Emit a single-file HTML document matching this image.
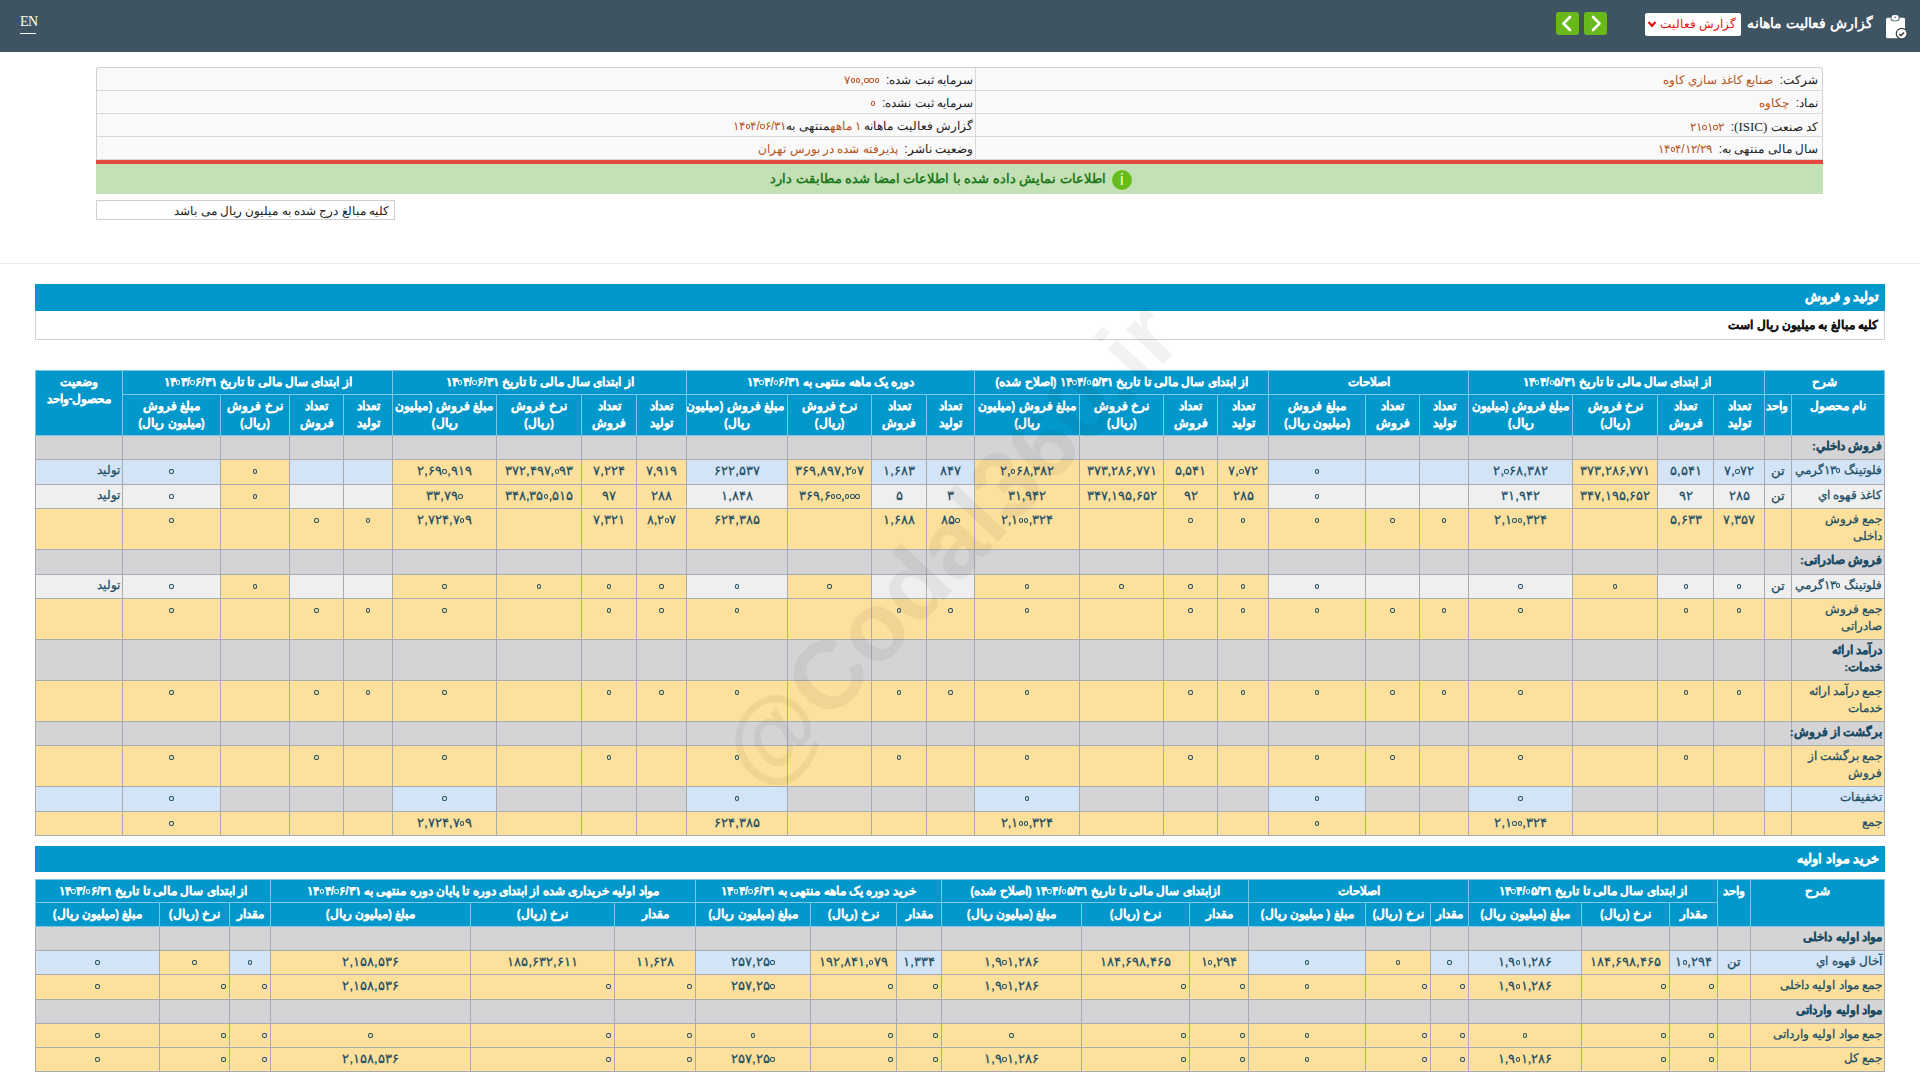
<!DOCTYPE html><html lang="fa" dir="rtl"><head><meta charset="utf-8"><title>گزارش فعالیت ماهانه</title><style>
*{box-sizing:border-box}
html,body{margin:0;padding:0;background:#fff}
body{width:1920px;height:1080px;overflow:hidden;position:relative;font-family:"Liberation Sans", sans-serif;direction:rtl;color:#222}
.abs{position:absolute}
#top{left:0;top:0;width:1920px;height:52px;background:#3f5462}
table.t{position:absolute;border-collapse:collapse;table-layout:fixed;direction:rtl;font-size:13px}
table.t td,table.t th{border:1px solid #a9abb2;padding:0 3px;overflow:hidden;white-space:normal;line-height:17px}
table.t th{background:#0398cb;color:#fff;font-weight:bold;text-align:center;border-color:#7cc7e6;font-size:12px;-webkit-text-stroke:0.2px #fff}
table.t td{-webkit-text-stroke:0.25px currentColor;color:#1b4c64;text-align:center;vertical-align:top;padding-top:2px}
td.nm{text-align:right!important;font-size:12px;padding-right:2px!important;padding-left:0!important}
td.nm.b{font-size:11.8px;overflow:visible}
table.t td,table.t th{white-space:nowrap}
td.b{font-weight:bold}
td.r{text-align:right!important}
table.t th.top{vertical-align:top;padding-top:3px}
.info{left:96px;top:67px;width:1727px;border:1px solid #d2d2d2;border-bottom:none;background:#f9f9f9;border-radius:3px 3px 0 0}
.info .row{height:23px;border-bottom:1px solid #d9d9d9;position:relative;font-size:12px;line-height:25px}
.info .c1{position:absolute;right:0;width:847px;top:0;height:22px;padding-right:4px;border-left:1px solid #d9d9d9}
.info .c2{position:absolute;left:0;width:880px;top:0;height:22px;padding-right:4px}
.v{color:#b5541a}
.n{direction:ltr;unicode-bidi:isolate}
.z{display:inline-block;width:4.4px;height:4.6px;border:1.5px solid currentColor;border-radius:50%;font-size:0;line-height:0;overflow:hidden;vertical-align:1px;margin:0 0.4px;-webkit-text-stroke:0}
</style></head><body>
<div id="top" class="abs"></div>
<div class="abs" style="left:20px;top:13px;width:25px;height:18px;font-family:'Liberation Serif',serif;font-size:14px;letter-spacing:-0.6px;color:#fff;line-height:18px;direction:ltr;text-align:left">EN</div>
<div class="abs" style="left:20px;top:33px;width:16px;height:1px;background:#fff"></div>
<svg class="abs" style="left:1876px;top:8px" width="40" height="36" viewBox="0 0 40 36"><rect x="10" y="9.7" width="19" height="20.6" rx="1.5" fill="#fff"/><rect x="14.6" y="6.3" width="9" height="7" rx="3.2" fill="#3f5462"/><rect x="15.5" y="7" width="7.2" height="5.4" rx="2.6" fill="#fff"/><circle cx="19.1" cy="9.3" r="0.8" fill="#3f5462"/><circle cx="25.7" cy="25.7" r="6" fill="#333c43"/><circle cx="25.7" cy="25.7" r="4.8" fill="#fff"/><path d="M23.3 26.1 l1.7 1.5 l3.1 -3.1" stroke="#333" stroke-width="1.4" fill="none"/></svg>
<div class="abs" style="left:1745px;top:12px;width:128px;height:24px;color:#fff;font-weight:bold;font-size:13.5px;line-height:24px;text-align:right;white-space:nowrap">گزارش فعالیت ماهانه</div>
<div class="abs" style="left:1645px;top:13px;width:96px;height:23px;background:#fff;border-radius:2px"></div>
<div class="abs" style="left:1660px;top:13px;width:76px;height:23px;color:#e0140f;font-size:12px;line-height:23px;text-align:right;white-space:nowrap">گزارش فعالیت</div>
<svg class="abs" style="left:1647px;top:19px" width="10" height="10" viewBox="0 0 10 10"><path d="M1.5 3 L5 6.8 L8.5 3" stroke="#e0140f" stroke-width="2.2" fill="none"/></svg>
<div class="abs" style="left:1556px;top:12px;width:23px;height:23px;background:#69b91c;border-radius:3px"></div>
<svg class="abs" style="left:1556px;top:12px" width="23" height="23" viewBox="0 0 23 23"><path d="M14 5 L7.5 11.5 L14 18" stroke="#fff" stroke-width="2.6" fill="none" stroke-linecap="round" stroke-linejoin="round"/></svg>
<div class="abs" style="left:1584px;top:12px;width:23px;height:23px;background:#69b91c;border-radius:3px"></div>
<svg class="abs" style="left:1584px;top:12px" width="23" height="23" viewBox="0 0 23 23"><path d="M9 5 L15.5 11.5 L9 18" stroke="#fff" stroke-width="2.6" fill="none" stroke-linecap="round" stroke-linejoin="round"/></svg>
<div class="abs info">
<div class="row"><div class="c1">شرکت:&nbsp; <span class="v">صنایع كاغذ سازي كاوه</span></div><div class="c2">سرمایه ثبت شده:&nbsp; <span class="v"><span class="n">۷<span class="z">۰</span><span class="z">۰</span>,<span class="z">۰</span><span class="z">۰</span><span class="z">۰</span></span></span></div></div>
<div class="row"><div class="c1">نماد:&nbsp; <span class="v">چکاوه</span></div><div class="c2">سرمایه ثبت نشده:&nbsp; <span class="v"><span class="n"><span class="z">۰</span></span></span></div></div>
<div class="row"><div class="c1">کد صنعت <span style="font-family:'Liberation Serif',serif;font-size:13px">(ISIC)</span>:&nbsp; <span class="v"><span class="n">۲۱<span class="z">۰</span>۱<span class="z">۰</span>۲</span></span></div><div class="c2">گزارش فعالیت ماهانه <span class="v"><span class="n">۱</span> ماهه</span>منتهی به<span class="v"><span class="n">۱۴<span class="z">۰</span>۴/<span class="z">۰</span>۶/۳۱</span></span>&nbsp; </div></div>
<div class="row"><div class="c1">سال مالی منتهی به:&nbsp; <span class="v"><span class="n">۱۴<span class="z">۰</span>۴/۱۲/۲۹</span></span></div><div class="c2">وضعیت ناشر:&nbsp; <span class="v">پذیرفته شده در بورس تهران</span></div></div>
</div>
<div class="abs" style="left:96px;top:160px;width:1727px;height:4px;background:#e5463d"></div>
<div class="abs" style="left:96px;top:164px;width:1727px;height:30px;background:#c3e1b4"></div>
<div class="abs" style="left:96px;top:200px;width:299px;height:20px;border:1px solid #cfcfcf"></div>
<div class="abs" style="left:0;top:263px;width:1920px;height:1px;background:#ececec"></div>
<div class="abs" style="left:96px;top:164px;width:1727px;height:30px;padding-right:17px;text-align:center;line-height:30px;font-size:12.7px;font-weight:bold;color:#1f7a1f;white-space:nowrap"><span style="display:inline-block;width:20px;height:20px;border-radius:50%;background:#67bb1b;color:#fff;font-size:14px;line-height:20px;text-align:center;vertical-align:middle;margin-left:6px;font-weight:normal;font-size:16px;font-family:'Liberation Sans',sans-serif">i</span>اطلاعات نمایش داده شده با اطلاعات امضا شده مطابقت دارد</div>
<div class="abs" style="left:97px;top:201px;width:297px;height:18px;text-align:right;line-height:21px;font-size:12px;color:#222;padding-right:5px;white-space:nowrap">کلیه مبالغ درج شده به میلیون ریال می باشد</div>
<div class="abs" style="left:35px;top:284px;width:1850px;height:27px;background:#0398cb"></div>
<div class="abs" style="left:35px;top:311px;width:1850px;height:29px;border:1px solid #cfcfcf;border-top:none"></div>
<div class="abs" style="left:35px;top:284px;width:1850px;height:27px;line-height:27px;color:#fff;font-weight:bold;font-size:12.5px;-webkit-text-stroke:0.3px #fff;text-align:right;padding-right:6px;white-space:nowrap">تولید و فروش</div>
<div class="abs" style="left:35px;top:311px;width:1850px;height:28px;line-height:28px;color:#111;font-weight:bold;font-size:12px;-webkit-text-stroke:0.2px #111;text-align:right;padding-right:7px;white-space:nowrap">کلیه مبالغ به میلیون ریال است</div>
<div class="abs" style="left:35px;top:846px;width:1850px;height:26px;background:#0398cb"></div>
<div class="abs" style="left:35px;top:846px;width:1850px;height:26px;line-height:26px;color:#fff;font-weight:bold;font-size:12.5px;-webkit-text-stroke:0.3px #fff;text-align:right;padding-right:6px;white-space:nowrap">خرید مواد اولیه</div>
<table class="t" id="t1" style="left:35px;top:370px;width:1850px">
<colgroup><col style="width:93px"><col style="width:27px"><col style="width:51px"><col style="width:56px"><col style="width:85px"><col style="width:104px"><col style="width:49px"><col style="width:54px"><col style="width:97px"><col style="width:51px"><col style="width:54px"><col style="width:84px"><col style="width:105px"><col style="width:48px"><col style="width:55px"><col style="width:84px"><col style="width:101px"><col style="width:50px"><col style="width:55px"><col style="width:85px"><col style="width:104px"><col style="width:49px"><col style="width:54px"><col style="width:69px"><col style="width:98px"><col style="width:87px"></colgroup>
<tr style="height:24px"><th colspan="2">شرح</th><th colspan="4">از ابتدای سال مالی تا تاریخ <span class="n">۱۴<span class="z">۰</span>۴/<span class="z">۰</span>۵/۳۱</span></th><th colspan="3">اصلاحات</th><th colspan="4">از ابتدای سال مالی تا تاریخ <span class="n">۱۴<span class="z">۰</span>۴/<span class="z">۰</span>۵/۳۱</span> (اصلاح شده)</th><th colspan="4">دوره یک ماهه منتهی به <span class="n">۱۴<span class="z">۰</span>۴/<span class="z">۰</span>۶/۳۱</span></th><th colspan="4">از ابتدای سال مالی تا تاریخ <span class="n">۱۴<span class="z">۰</span>۴/<span class="z">۰</span>۶/۳۱</span></th><th colspan="4">از ابتدای سال مالی تا تاریخ <span class="n">۱۴<span class="z">۰</span>۳/<span class="z">۰</span>۶/۳۱</span></th><th rowspan="2" class="top">وضعیت<br>محصول-واحد</th></tr>
<tr style="height:41px"><th class="top">نام محصول</th><th class="top">واحد</th><th class="top">تعداد<br>تولید</th><th class="top">تعداد<br>فروش</th><th class="top">نرخ فروش<br>(ریال)</th><th class="top">مبلغ فروش (میلیون<br>ریال)</th><th class="top">تعداد<br>تولید</th><th class="top">تعداد<br>فروش</th><th class="top">مبلغ فروش<br>(میلیون ریال)</th><th class="top">تعداد<br>تولید</th><th class="top">تعداد<br>فروش</th><th class="top">نرخ فروش<br>(ریال)</th><th class="top">مبلغ فروش (میلیون<br>ریال)</th><th class="top">تعداد<br>تولید</th><th class="top">تعداد<br>فروش</th><th class="top">نرخ فروش<br>(ریال)</th><th class="top">مبلغ فروش (میلیون<br>ریال)</th><th class="top">تعداد<br>تولید</th><th class="top">تعداد<br>فروش</th><th class="top">نرخ فروش<br>(ریال)</th><th class="top">مبلغ فروش (میلیون<br>ریال)</th><th class="top">تعداد<br>تولید</th><th class="top">تعداد<br>فروش</th><th class="top">نرخ فروش<br>(ریال)</th><th class="top">مبلغ فروش<br>(میلیون ریال)</th></tr>
<tr style="height:24px"><td class="nm b" style="background:#d4d4d6">فروش داخلي:</td><td class="" style="background:#d4d4d6"></td><td class="" style="background:#d4d4d6"></td><td class="" style="background:#d4d4d6"></td><td class="" style="background:#d4d4d6"></td><td class="" style="background:#d4d4d6"></td><td class="" style="background:#d4d4d6"></td><td class="" style="background:#d4d4d6"></td><td class="" style="background:#d4d4d6"></td><td class="" style="background:#d4d4d6"></td><td class="" style="background:#d4d4d6"></td><td class="" style="background:#d4d4d6"></td><td class="" style="background:#d4d4d6"></td><td class="" style="background:#d4d4d6"></td><td class="" style="background:#d4d4d6"></td><td class="" style="background:#d4d4d6"></td><td class="" style="background:#d4d4d6"></td><td class="" style="background:#d4d4d6"></td><td class="" style="background:#d4d4d6"></td><td class="" style="background:#d4d4d6"></td><td class="" style="background:#d4d4d6"></td><td class="" style="background:#d4d4d6"></td><td class="" style="background:#d4d4d6"></td><td class="" style="background:#d4d4d6"></td><td class="" style="background:#d4d4d6"></td><td class="" style="background:#d4d4d6"></td></tr>
<tr style="height:25px"><td class="nm" style="background:#d2e4f5">فلوتینگ <span class="n">۱۳<span class="z">۰</span></span>گرمي</td><td class="" style="background:#d2e4f5">تن</td><td class="" style="background:#d2e4f5"><span class="n">۷,<span class="z">۰</span>۷۲</span></td><td class="" style="background:#d2e4f5"><span class="n">۵,۵۴۱</span></td><td class="" style="background:#fde09b"><span class="n">۳۷۳,۲۸۶,۷۷۱</span></td><td class="" style="background:#d2e4f5"><span class="n">۲,<span class="z">۰</span>۶۸,۳۸۲</span></td><td class="" style="background:#d2e4f5"></td><td class="" style="background:#d2e4f5"></td><td class="" style="background:#d2e4f5"><span class="n"><span class="z">۰</span></span></td><td class="" style="background:#fde09b"><span class="n">۷,<span class="z">۰</span>۷۲</span></td><td class="" style="background:#fde09b"><span class="n">۵,۵۴۱</span></td><td class="" style="background:#fde09b"><span class="n">۳۷۳,۲۸۶,۷۷۱</span></td><td class="" style="background:#fde09b"><span class="n">۲,<span class="z">۰</span>۶۸,۳۸۲</span></td><td class="" style="background:#d2e4f5"><span class="n">۸۴۷</span></td><td class="" style="background:#d2e4f5"><span class="n">۱,۶۸۳</span></td><td class="" style="background:#fde09b"><span class="n">۳۶۹,۸۹۷,۲<span class="z">۰</span>۷</span></td><td class="" style="background:#d2e4f5"><span class="n">۶۲۲,۵۳۷</span></td><td class="" style="background:#fde09b"><span class="n">۷,۹۱۹</span></td><td class="" style="background:#fde09b"><span class="n">۷,۲۲۴</span></td><td class="" style="background:#fde09b"><span class="n">۳۷۲,۴۹۷,<span class="z">۰</span>۹۳</span></td><td class="" style="background:#fde09b"><span class="n">۲,۶۹<span class="z">۰</span>,۹۱۹</span></td><td class="" style="background:#d2e4f5"></td><td class="" style="background:#d2e4f5"></td><td class="" style="background:#fde09b"><span class="n"><span class="z">۰</span></span></td><td class="" style="background:#d2e4f5"><span class="n"><span class="z">۰</span></span></td><td class="nm" style="background:#d2e4f5">تولید</td></tr>
<tr style="height:24px"><td class="nm" style="background:#efefef">کاغذ قهوه اي</td><td class="" style="background:#efefef">تن</td><td class="" style="background:#efefef"><span class="n">۲۸۵</span></td><td class="" style="background:#efefef"><span class="n">۹۲</span></td><td class="" style="background:#fde09b"><span class="n">۳۴۷,۱۹۵,۶۵۲</span></td><td class="" style="background:#efefef"><span class="n">۳۱,۹۴۲</span></td><td class="" style="background:#efefef"></td><td class="" style="background:#efefef"></td><td class="" style="background:#efefef"><span class="n"><span class="z">۰</span></span></td><td class="" style="background:#fde09b"><span class="n">۲۸۵</span></td><td class="" style="background:#fde09b"><span class="n">۹۲</span></td><td class="" style="background:#fde09b"><span class="n">۳۴۷,۱۹۵,۶۵۲</span></td><td class="" style="background:#fde09b"><span class="n">۳۱,۹۴۲</span></td><td class="" style="background:#efefef"><span class="n">۳</span></td><td class="" style="background:#efefef"><span class="n">۵</span></td><td class="" style="background:#fde09b"><span class="n">۳۶۹,۶<span class="z">۰</span><span class="z">۰</span>,<span class="z">۰</span><span class="z">۰</span><span class="z">۰</span></span></td><td class="" style="background:#efefef"><span class="n">۱,۸۴۸</span></td><td class="" style="background:#fde09b"><span class="n">۲۸۸</span></td><td class="" style="background:#fde09b"><span class="n">۹۷</span></td><td class="" style="background:#fde09b"><span class="n">۳۴۸,۳۵<span class="z">۰</span>,۵۱۵</span></td><td class="" style="background:#fde09b"><span class="n">۳۳,۷۹<span class="z">۰</span></span></td><td class="" style="background:#efefef"></td><td class="" style="background:#efefef"></td><td class="" style="background:#fde09b"><span class="n"><span class="z">۰</span></span></td><td class="" style="background:#efefef"><span class="n"><span class="z">۰</span></span></td><td class="nm" style="background:#efefef">تولید</td></tr>
<tr style="height:41px"><td class="nm" style="background:#fde09b">جمع فروش<br>داخلی</td><td class="" style="background:#fde09b"></td><td class="" style="background:#fde09b"><span class="n">۷,۳۵۷</span></td><td class="" style="background:#fde09b"><span class="n">۵,۶۳۳</span></td><td class="" style="background:#fde09b"></td><td class="" style="background:#fde09b"><span class="n">۲,۱<span class="z">۰</span><span class="z">۰</span>,۳۲۴</span></td><td class="" style="background:#fde09b"><span class="n"><span class="z">۰</span></span></td><td class="" style="background:#fde09b"><span class="n"><span class="z">۰</span></span></td><td class="" style="background:#fde09b"><span class="n"><span class="z">۰</span></span></td><td class="" style="background:#fde09b"><span class="n"><span class="z">۰</span></span></td><td class="" style="background:#fde09b"><span class="n"><span class="z">۰</span></span></td><td class="" style="background:#fde09b"></td><td class="" style="background:#fde09b"><span class="n">۲,۱<span class="z">۰</span><span class="z">۰</span>,۳۲۴</span></td><td class="" style="background:#fde09b"><span class="n">۸۵<span class="z">۰</span></span></td><td class="" style="background:#fde09b"><span class="n">۱,۶۸۸</span></td><td class="" style="background:#fde09b"></td><td class="" style="background:#fde09b"><span class="n">۶۲۴,۳۸۵</span></td><td class="" style="background:#fde09b"><span class="n">۸,۲<span class="z">۰</span>۷</span></td><td class="" style="background:#fde09b"><span class="n">۷,۳۲۱</span></td><td class="" style="background:#fde09b"></td><td class="" style="background:#fde09b"><span class="n">۲,۷۲۴,۷<span class="z">۰</span>۹</span></td><td class="" style="background:#fde09b"><span class="n"><span class="z">۰</span></span></td><td class="" style="background:#fde09b"><span class="n"><span class="z">۰</span></span></td><td class="" style="background:#fde09b"></td><td class="" style="background:#fde09b"><span class="n"><span class="z">۰</span></span></td><td class="nm" style="background:#fde09b"></td></tr>
<tr style="height:25px"><td class="nm b" style="background:#d4d4d6">فروش صادراتی:</td><td class="" style="background:#d4d4d6"></td><td class="" style="background:#d4d4d6"></td><td class="" style="background:#d4d4d6"></td><td class="" style="background:#d4d4d6"></td><td class="" style="background:#d4d4d6"></td><td class="" style="background:#d4d4d6"></td><td class="" style="background:#d4d4d6"></td><td class="" style="background:#d4d4d6"></td><td class="" style="background:#d4d4d6"></td><td class="" style="background:#d4d4d6"></td><td class="" style="background:#d4d4d6"></td><td class="" style="background:#d4d4d6"></td><td class="" style="background:#d4d4d6"></td><td class="" style="background:#d4d4d6"></td><td class="" style="background:#d4d4d6"></td><td class="" style="background:#d4d4d6"></td><td class="" style="background:#d4d4d6"></td><td class="" style="background:#d4d4d6"></td><td class="" style="background:#d4d4d6"></td><td class="" style="background:#d4d4d6"></td><td class="" style="background:#d4d4d6"></td><td class="" style="background:#d4d4d6"></td><td class="" style="background:#d4d4d6"></td><td class="" style="background:#d4d4d6"></td><td class="" style="background:#d4d4d6"></td></tr>
<tr style="height:24px"><td class="nm" style="background:#efefef">فلوتینگ <span class="n">۱۳<span class="z">۰</span></span>گرمي</td><td class="" style="background:#efefef">تن</td><td class="" style="background:#efefef"><span class="n"><span class="z">۰</span></span></td><td class="" style="background:#efefef"><span class="n"><span class="z">۰</span></span></td><td class="" style="background:#fde09b"><span class="n"><span class="z">۰</span></span></td><td class="" style="background:#efefef"><span class="n"><span class="z">۰</span></span></td><td class="" style="background:#efefef"></td><td class="" style="background:#efefef"></td><td class="" style="background:#efefef"><span class="n"><span class="z">۰</span></span></td><td class="" style="background:#fde09b"><span class="n"><span class="z">۰</span></span></td><td class="" style="background:#fde09b"><span class="n"><span class="z">۰</span></span></td><td class="" style="background:#fde09b"><span class="n"><span class="z">۰</span></span></td><td class="" style="background:#fde09b"><span class="n"><span class="z">۰</span></span></td><td class="" style="background:#efefef"></td><td class="" style="background:#efefef"></td><td class="" style="background:#fde09b"><span class="n"><span class="z">۰</span></span></td><td class="" style="background:#efefef"><span class="n"><span class="z">۰</span></span></td><td class="" style="background:#fde09b"><span class="n"><span class="z">۰</span></span></td><td class="" style="background:#fde09b"><span class="n"><span class="z">۰</span></span></td><td class="" style="background:#fde09b"><span class="n"><span class="z">۰</span></span></td><td class="" style="background:#fde09b"><span class="n"><span class="z">۰</span></span></td><td class="" style="background:#efefef"></td><td class="" style="background:#efefef"></td><td class="" style="background:#fde09b"><span class="n"><span class="z">۰</span></span></td><td class="" style="background:#efefef"><span class="n"><span class="z">۰</span></span></td><td class="nm" style="background:#efefef">تولید</td></tr>
<tr style="height:41px"><td class="nm" style="background:#fde09b">جمع فروش<br>صادراتی</td><td class="" style="background:#fde09b"></td><td class="" style="background:#fde09b"><span class="n"><span class="z">۰</span></span></td><td class="" style="background:#fde09b"><span class="n"><span class="z">۰</span></span></td><td class="" style="background:#fde09b"></td><td class="" style="background:#fde09b"><span class="n"><span class="z">۰</span></span></td><td class="" style="background:#fde09b"><span class="n"><span class="z">۰</span></span></td><td class="" style="background:#fde09b"><span class="n"><span class="z">۰</span></span></td><td class="" style="background:#fde09b"><span class="n"><span class="z">۰</span></span></td><td class="" style="background:#fde09b"><span class="n"><span class="z">۰</span></span></td><td class="" style="background:#fde09b"><span class="n"><span class="z">۰</span></span></td><td class="" style="background:#fde09b"></td><td class="" style="background:#fde09b"><span class="n"><span class="z">۰</span></span></td><td class="" style="background:#fde09b"><span class="n"><span class="z">۰</span></span></td><td class="" style="background:#fde09b"><span class="n"><span class="z">۰</span></span></td><td class="" style="background:#fde09b"></td><td class="" style="background:#fde09b"><span class="n"><span class="z">۰</span></span></td><td class="" style="background:#fde09b"><span class="n"><span class="z">۰</span></span></td><td class="" style="background:#fde09b"><span class="n"><span class="z">۰</span></span></td><td class="" style="background:#fde09b"></td><td class="" style="background:#fde09b"><span class="n"><span class="z">۰</span></span></td><td class="" style="background:#fde09b"><span class="n"><span class="z">۰</span></span></td><td class="" style="background:#fde09b"><span class="n"><span class="z">۰</span></span></td><td class="" style="background:#fde09b"></td><td class="" style="background:#fde09b"><span class="n"><span class="z">۰</span></span></td><td class="nm" style="background:#fde09b"></td></tr>
<tr style="height:41px"><td class="nm b" style="background:#d4d4d6">درآمد ارائه<br>خدمات:</td><td class="" style="background:#d4d4d6"></td><td class="" style="background:#d4d4d6"></td><td class="" style="background:#d4d4d6"></td><td class="" style="background:#d4d4d6"></td><td class="" style="background:#d4d4d6"></td><td class="" style="background:#d4d4d6"></td><td class="" style="background:#d4d4d6"></td><td class="" style="background:#d4d4d6"></td><td class="" style="background:#d4d4d6"></td><td class="" style="background:#d4d4d6"></td><td class="" style="background:#d4d4d6"></td><td class="" style="background:#d4d4d6"></td><td class="" style="background:#d4d4d6"></td><td class="" style="background:#d4d4d6"></td><td class="" style="background:#d4d4d6"></td><td class="" style="background:#d4d4d6"></td><td class="" style="background:#d4d4d6"></td><td class="" style="background:#d4d4d6"></td><td class="" style="background:#d4d4d6"></td><td class="" style="background:#d4d4d6"></td><td class="" style="background:#d4d4d6"></td><td class="" style="background:#d4d4d6"></td><td class="" style="background:#d4d4d6"></td><td class="" style="background:#d4d4d6"></td><td class="" style="background:#d4d4d6"></td></tr>
<tr style="height:41px"><td class="nm" style="background:#fde09b">جمع درآمد ارائه<br>خدمات</td><td class="" style="background:#fde09b"></td><td class="" style="background:#fde09b"><span class="n"><span class="z">۰</span></span></td><td class="" style="background:#fde09b"><span class="n"><span class="z">۰</span></span></td><td class="" style="background:#fde09b"></td><td class="" style="background:#fde09b"><span class="n"><span class="z">۰</span></span></td><td class="" style="background:#fde09b"><span class="n"><span class="z">۰</span></span></td><td class="" style="background:#fde09b"><span class="n"><span class="z">۰</span></span></td><td class="" style="background:#fde09b"><span class="n"><span class="z">۰</span></span></td><td class="" style="background:#fde09b"><span class="n"><span class="z">۰</span></span></td><td class="" style="background:#fde09b"><span class="n"><span class="z">۰</span></span></td><td class="" style="background:#fde09b"></td><td class="" style="background:#fde09b"><span class="n"><span class="z">۰</span></span></td><td class="" style="background:#fde09b"><span class="n"><span class="z">۰</span></span></td><td class="" style="background:#fde09b"><span class="n"><span class="z">۰</span></span></td><td class="" style="background:#fde09b"></td><td class="" style="background:#fde09b"><span class="n"><span class="z">۰</span></span></td><td class="" style="background:#fde09b"><span class="n"><span class="z">۰</span></span></td><td class="" style="background:#fde09b"><span class="n"><span class="z">۰</span></span></td><td class="" style="background:#fde09b"></td><td class="" style="background:#fde09b"><span class="n"><span class="z">۰</span></span></td><td class="" style="background:#fde09b"><span class="n"><span class="z">۰</span></span></td><td class="" style="background:#fde09b"><span class="n"><span class="z">۰</span></span></td><td class="" style="background:#fde09b"></td><td class="" style="background:#fde09b"><span class="n"><span class="z">۰</span></span></td><td class="nm" style="background:#fde09b"></td></tr>
<tr style="height:24px"><td class="nm b" style="background:#d4d4d6">برگشت از فروش:</td><td class="" style="background:#d4d4d6"></td><td class="" style="background:#d4d4d6"></td><td class="" style="background:#d4d4d6"></td><td class="" style="background:#d4d4d6"></td><td class="" style="background:#d4d4d6"></td><td class="" style="background:#d4d4d6"></td><td class="" style="background:#d4d4d6"></td><td class="" style="background:#d4d4d6"></td><td class="" style="background:#d4d4d6"></td><td class="" style="background:#d4d4d6"></td><td class="" style="background:#d4d4d6"></td><td class="" style="background:#d4d4d6"></td><td class="" style="background:#d4d4d6"></td><td class="" style="background:#d4d4d6"></td><td class="" style="background:#d4d4d6"></td><td class="" style="background:#d4d4d6"></td><td class="" style="background:#d4d4d6"></td><td class="" style="background:#d4d4d6"></td><td class="" style="background:#d4d4d6"></td><td class="" style="background:#d4d4d6"></td><td class="" style="background:#d4d4d6"></td><td class="" style="background:#d4d4d6"></td><td class="" style="background:#d4d4d6"></td><td class="" style="background:#d4d4d6"></td><td class="" style="background:#d4d4d6"></td></tr>
<tr style="height:41px"><td class="nm" style="background:#fde09b">جمع برگشت از<br>فروش</td><td class="" style="background:#fde09b"></td><td class="" style="background:#fde09b"></td><td class="" style="background:#fde09b"><span class="n"><span class="z">۰</span></span></td><td class="" style="background:#fde09b"></td><td class="" style="background:#fde09b"><span class="n"><span class="z">۰</span></span></td><td class="" style="background:#fde09b"></td><td class="" style="background:#fde09b"><span class="n"><span class="z">۰</span></span></td><td class="" style="background:#fde09b"><span class="n"><span class="z">۰</span></span></td><td class="" style="background:#fde09b"></td><td class="" style="background:#fde09b"><span class="n"><span class="z">۰</span></span></td><td class="" style="background:#fde09b"></td><td class="" style="background:#fde09b"><span class="n"><span class="z">۰</span></span></td><td class="" style="background:#fde09b"></td><td class="" style="background:#fde09b"><span class="n"><span class="z">۰</span></span></td><td class="" style="background:#fde09b"></td><td class="" style="background:#fde09b"><span class="n"><span class="z">۰</span></span></td><td class="" style="background:#fde09b"></td><td class="" style="background:#fde09b"><span class="n"><span class="z">۰</span></span></td><td class="" style="background:#fde09b"></td><td class="" style="background:#fde09b"><span class="n"><span class="z">۰</span></span></td><td class="" style="background:#fde09b"></td><td class="" style="background:#fde09b"><span class="n"><span class="z">۰</span></span></td><td class="" style="background:#fde09b"></td><td class="" style="background:#fde09b"><span class="n"><span class="z">۰</span></span></td><td class="nm" style="background:#fde09b"></td></tr>
<tr style="height:25px"><td class="nm" style="background:#d2e4f5">تخفیفات</td><td class="" style="background:#d2e4f5"></td><td class="" style="background:#d4d4d6"></td><td class="" style="background:#d4d4d6"></td><td class="" style="background:#d4d4d6"></td><td class="" style="background:#d2e4f5"><span class="n"><span class="z">۰</span></span></td><td class="" style="background:#d4d4d6"></td><td class="" style="background:#d4d4d6"></td><td class="" style="background:#d2e4f5"><span class="n"><span class="z">۰</span></span></td><td class="" style="background:#d4d4d6"></td><td class="" style="background:#d4d4d6"></td><td class="" style="background:#d4d4d6"></td><td class="" style="background:#d2e4f5"><span class="n"><span class="z">۰</span></span></td><td class="" style="background:#d4d4d6"></td><td class="" style="background:#d4d4d6"></td><td class="" style="background:#d4d4d6"></td><td class="" style="background:#d2e4f5"><span class="n"><span class="z">۰</span></span></td><td class="" style="background:#d4d4d6"></td><td class="" style="background:#d4d4d6"></td><td class="" style="background:#d4d4d6"></td><td class="" style="background:#d2e4f5"><span class="n"><span class="z">۰</span></span></td><td class="" style="background:#d4d4d6"></td><td class="" style="background:#d4d4d6"></td><td class="" style="background:#d4d4d6"></td><td class="" style="background:#d2e4f5"><span class="n"><span class="z">۰</span></span></td><td class="nm" style="background:#d2e4f5"></td></tr>
<tr style="height:24px"><td class="nm" style="background:#fde09b">جمع</td><td class="" style="background:#fde09b"></td><td class="" style="background:#fde09b"></td><td class="" style="background:#fde09b"></td><td class="" style="background:#fde09b"></td><td class="" style="background:#fde09b"><span class="n">۲,۱<span class="z">۰</span><span class="z">۰</span>,۳۲۴</span></td><td class="" style="background:#fde09b"></td><td class="" style="background:#fde09b"></td><td class="" style="background:#fde09b"><span class="n"><span class="z">۰</span></span></td><td class="" style="background:#fde09b"></td><td class="" style="background:#fde09b"></td><td class="" style="background:#fde09b"></td><td class="" style="background:#fde09b"><span class="n">۲,۱<span class="z">۰</span><span class="z">۰</span>,۳۲۴</span></td><td class="" style="background:#fde09b"></td><td class="" style="background:#fde09b"></td><td class="" style="background:#fde09b"></td><td class="" style="background:#fde09b"><span class="n">۶۲۴,۳۸۵</span></td><td class="" style="background:#fde09b"></td><td class="" style="background:#fde09b"></td><td class="" style="background:#fde09b"></td><td class="" style="background:#fde09b"><span class="n">۲,۷۲۴,۷<span class="z">۰</span>۹</span></td><td class="" style="background:#fde09b"></td><td class="" style="background:#fde09b"></td><td class="" style="background:#fde09b"></td><td class="" style="background:#fde09b"><span class="n"><span class="z">۰</span></span></td><td class="nm" style="background:#fde09b"></td></tr>
</table>
<table class="t" id="t2" style="left:35px;top:879px;width:1850px">
<colgroup><col style="width:134px"><col style="width:33px"><col style="width:48px"><col style="width:88px"><col style="width:113px"><col style="width:38px"><col style="width:65px"><col style="width:117px"><col style="width:59px"><col style="width:108px"><col style="width:140px"><col style="width:45px"><col style="width:86px"><col style="width:115px"><col style="width:81px"><col style="width:144px"><col style="width:200px"><col style="width:41px"><col style="width:70px"><col style="width:124px"></colgroup>
<tr style="height:23px"><th rowspan="2" class="top">شرح</th><th rowspan="2" class="top">واحد</th><th colspan="3">از ابتدای سال مالی تا تاریخ <span class="n">۱۴<span class="z">۰</span>۴/<span class="z">۰</span>۵/۳۱</span></th><th colspan="3">اصلاحات</th><th colspan="3">ازابتدای سال مالی تا تاریخ <span class="n">۱۴<span class="z">۰</span>۴/<span class="z">۰</span>۵/۳۱</span> (اصلاح شده)</th><th colspan="3">خرید دوره یک ماهه منتهی به <span class="n">۱۴<span class="z">۰</span>۴/<span class="z">۰</span>۶/۳۱</span></th><th colspan="3">مواد اولیه خریداری شده از ابتدای دوره تا پایان دوره منتهی به <span class="n">۱۴<span class="z">۰</span>۴/<span class="z">۰</span>۶/۳۱</span></th><th colspan="3">از ابتدای سال مالی تا تاریخ <span class="n">۱۴<span class="z">۰</span>۳/<span class="z">۰</span>۶/۳۱</span></th></tr>
<tr style="height:24px"><th>مقدار</th><th>نرخ (ریال)</th><th>مبلغ (میلیون ریال)</th><th>مقدار</th><th>نرخ (ریال)</th><th>مبلغ ( میلیون ریال)</th><th>مقدار</th><th>نرخ (ریال)</th><th>مبلغ (میلیون ریال)</th><th>مقدار</th><th>نرخ (ریال)</th><th>مبلغ (میلیون ریال)</th><th>مقدار</th><th>نرخ (ریال)</th><th>مبلغ (میلیون ریال)</th><th>مقدار</th><th>نرخ (ریال)</th><th>مبلغ (میلیون ریال)</th></tr>
<tr style="height:24px"><td class="nm b" style="background:#d4d4d6">مواد اولیه داخلی</td><td class="" style="background:#d4d4d6"></td><td class="" style="background:#d4d4d6"></td><td class="" style="background:#d4d4d6"></td><td class="" style="background:#d4d4d6"></td><td class="" style="background:#d4d4d6"></td><td class="" style="background:#d4d4d6"></td><td class="" style="background:#d4d4d6"></td><td class="" style="background:#d4d4d6"></td><td class="" style="background:#d4d4d6"></td><td class="" style="background:#d4d4d6"></td><td class="" style="background:#d4d4d6"></td><td class="" style="background:#d4d4d6"></td><td class="" style="background:#d4d4d6"></td><td class="" style="background:#d4d4d6"></td><td class="" style="background:#d4d4d6"></td><td class="" style="background:#d4d4d6"></td><td class="" style="background:#d4d4d6"></td><td class="" style="background:#d4d4d6"></td><td class="" style="background:#d4d4d6"></td></tr>
<tr style="height:24px"><td class="nm" style="background:#d2e4f5">آخال قهوه اي</td><td class="" style="background:#d2e4f5">تن</td><td class="" style="background:#d2e4f5"><span class="n">۱<span class="z">۰</span>,۲۹۴</span></td><td class="" style="background:#fde09b"><span class="n">۱۸۴,۶۹۸,۴۶۵</span></td><td class="" style="background:#d2e4f5"><span class="n">۱,۹<span class="z">۰</span>۱,۲۸۶</span></td><td class="" style="background:#d2e4f5"><span class="n"><span class="z">۰</span></span></td><td class="" style="background:#fde09b"><span class="n"><span class="z">۰</span></span></td><td class="" style="background:#d2e4f5"><span class="n"><span class="z">۰</span></span></td><td class="" style="background:#fde09b"><span class="n">۱<span class="z">۰</span>,۲۹۴</span></td><td class="" style="background:#fde09b"><span class="n">۱۸۴,۶۹۸,۴۶۵</span></td><td class="" style="background:#fde09b"><span class="n">۱,۹<span class="z">۰</span>۱,۲۸۶</span></td><td class="" style="background:#d2e4f5"><span class="n">۱,۳۳۴</span></td><td class="" style="background:#fde09b"><span class="n">۱۹۲,۸۴۱,<span class="z">۰</span>۷۹</span></td><td class="" style="background:#d2e4f5"><span class="n">۲۵۷,۲۵<span class="z">۰</span></span></td><td class="" style="background:#fde09b"><span class="n">۱۱,۶۲۸</span></td><td class="" style="background:#fde09b"><span class="n">۱۸۵,۶۳۲,۶۱۱</span></td><td class="" style="background:#fde09b"><span class="n">۲,۱۵۸,۵۳۶</span></td><td class="" style="background:#d2e4f5"><span class="n"><span class="z">۰</span></span></td><td class="" style="background:#fde09b"><span class="n"><span class="z">۰</span></span></td><td class="" style="background:#d2e4f5"><span class="n"><span class="z">۰</span></span></td></tr>
<tr style="height:25px"><td class="nm" style="background:#fde09b">جمع مواد اولیه داخلی</td><td class="" style="background:#fde09b"></td><td class="r" style="background:#fde09b"><span class="n"><span class="z">۰</span></span></td><td class="r" style="background:#fde09b"><span class="n"><span class="z">۰</span></span></td><td class="" style="background:#fde09b"><span class="n">۱,۹<span class="z">۰</span>۱,۲۸۶</span></td><td class="r" style="background:#fde09b"><span class="n"><span class="z">۰</span></span></td><td class="r" style="background:#fde09b"><span class="n"><span class="z">۰</span></span></td><td class="" style="background:#fde09b"><span class="n"><span class="z">۰</span></span></td><td class="r" style="background:#fde09b"><span class="n"><span class="z">۰</span></span></td><td class="r" style="background:#fde09b"><span class="n"><span class="z">۰</span></span></td><td class="" style="background:#fde09b"><span class="n">۱,۹<span class="z">۰</span>۱,۲۸۶</span></td><td class="r" style="background:#fde09b"><span class="n"><span class="z">۰</span></span></td><td class="r" style="background:#fde09b"><span class="n"><span class="z">۰</span></span></td><td class="" style="background:#fde09b"><span class="n">۲۵۷,۲۵<span class="z">۰</span></span></td><td class="r" style="background:#fde09b"><span class="n"><span class="z">۰</span></span></td><td class="r" style="background:#fde09b"><span class="n"><span class="z">۰</span></span></td><td class="" style="background:#fde09b"><span class="n">۲,۱۵۸,۵۳۶</span></td><td class="r" style="background:#fde09b"><span class="n"><span class="z">۰</span></span></td><td class="r" style="background:#fde09b"><span class="n"><span class="z">۰</span></span></td><td class="" style="background:#fde09b"><span class="n"><span class="z">۰</span></span></td></tr>
<tr style="height:24px"><td class="nm b" style="background:#d4d4d6">مواد اولیه وارداتی</td><td class="" style="background:#d4d4d6"></td><td class="" style="background:#d4d4d6"></td><td class="" style="background:#d4d4d6"></td><td class="" style="background:#d4d4d6"></td><td class="" style="background:#d4d4d6"></td><td class="" style="background:#d4d4d6"></td><td class="" style="background:#d4d4d6"></td><td class="" style="background:#d4d4d6"></td><td class="" style="background:#d4d4d6"></td><td class="" style="background:#d4d4d6"></td><td class="" style="background:#d4d4d6"></td><td class="" style="background:#d4d4d6"></td><td class="" style="background:#d4d4d6"></td><td class="" style="background:#d4d4d6"></td><td class="" style="background:#d4d4d6"></td><td class="" style="background:#d4d4d6"></td><td class="" style="background:#d4d4d6"></td><td class="" style="background:#d4d4d6"></td><td class="" style="background:#d4d4d6"></td></tr>
<tr style="height:24px"><td class="nm" style="background:#fde09b">جمع مواد اولیه وارداتی</td><td class="" style="background:#fde09b"></td><td class="r" style="background:#fde09b"><span class="n"><span class="z">۰</span></span></td><td class="r" style="background:#fde09b"><span class="n"><span class="z">۰</span></span></td><td class="" style="background:#fde09b"><span class="n"><span class="z">۰</span></span></td><td class="r" style="background:#fde09b"><span class="n"><span class="z">۰</span></span></td><td class="r" style="background:#fde09b"><span class="n"><span class="z">۰</span></span></td><td class="" style="background:#fde09b"><span class="n"><span class="z">۰</span></span></td><td class="r" style="background:#fde09b"><span class="n"><span class="z">۰</span></span></td><td class="r" style="background:#fde09b"><span class="n"><span class="z">۰</span></span></td><td class="" style="background:#fde09b"><span class="n"><span class="z">۰</span></span></td><td class="r" style="background:#fde09b"><span class="n"><span class="z">۰</span></span></td><td class="r" style="background:#fde09b"><span class="n"><span class="z">۰</span></span></td><td class="" style="background:#fde09b"><span class="n"><span class="z">۰</span></span></td><td class="r" style="background:#fde09b"><span class="n"><span class="z">۰</span></span></td><td class="r" style="background:#fde09b"><span class="n"><span class="z">۰</span></span></td><td class="" style="background:#fde09b"><span class="n"><span class="z">۰</span></span></td><td class="r" style="background:#fde09b"><span class="n"><span class="z">۰</span></span></td><td class="r" style="background:#fde09b"><span class="n"><span class="z">۰</span></span></td><td class="" style="background:#fde09b"><span class="n"><span class="z">۰</span></span></td></tr>
<tr style="height:24px"><td class="nm" style="background:#fde09b">جمع کل</td><td class="" style="background:#fde09b"></td><td class="r" style="background:#fde09b"><span class="n"><span class="z">۰</span></span></td><td class="r" style="background:#fde09b"><span class="n"><span class="z">۰</span></span></td><td class="" style="background:#fde09b"><span class="n">۱,۹<span class="z">۰</span>۱,۲۸۶</span></td><td class="r" style="background:#fde09b"><span class="n"><span class="z">۰</span></span></td><td class="r" style="background:#fde09b"><span class="n"><span class="z">۰</span></span></td><td class="" style="background:#fde09b"><span class="n"><span class="z">۰</span></span></td><td class="r" style="background:#fde09b"><span class="n"><span class="z">۰</span></span></td><td class="r" style="background:#fde09b"><span class="n"><span class="z">۰</span></span></td><td class="" style="background:#fde09b"><span class="n">۱,۹<span class="z">۰</span>۱,۲۸۶</span></td><td class="r" style="background:#fde09b"><span class="n"><span class="z">۰</span></span></td><td class="r" style="background:#fde09b"><span class="n"><span class="z">۰</span></span></td><td class="" style="background:#fde09b"><span class="n">۲۵۷,۲۵<span class="z">۰</span></span></td><td class="r" style="background:#fde09b"><span class="n"><span class="z">۰</span></span></td><td class="r" style="background:#fde09b"><span class="n"><span class="z">۰</span></span></td><td class="" style="background:#fde09b"><span class="n">۲,۱۵۸,۵۳۶</span></td><td class="r" style="background:#fde09b"><span class="n"><span class="z">۰</span></span></td><td class="r" style="background:#fde09b"><span class="n"><span class="z">۰</span></span></td><td class="" style="background:#fde09b"><span class="n"><span class="z">۰</span></span></td></tr>
</table>
<div class="abs" style="left:950px;top:545px;width:0;height:0;z-index:5;pointer-events:none"><div style="position:absolute;left:-450px;top:-70px;width:900px;height:140px;line-height:140px;text-align:center;direction:ltr;font-size:97px;font-weight:bold;color:rgba(0,0,0,0.052);transform:rotate(-47deg);white-space:nowrap">@Codal360.ir</div></div>
</body></html>
